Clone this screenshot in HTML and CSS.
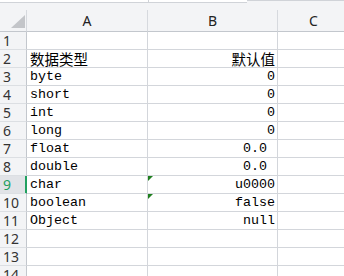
FILE: index.html
```html
<!DOCTYPE html>
<html lang="zh">
<head>
  <meta charset="UTF-8" />
  <title>Sheet1</title>
  <link rel="stylesheet" href="styles.css">
</head>
<body>
  <div class="sheet">
    <div class="formula">
      <div class="namebox"></div>
      <div class="gap"></div>
      <div class="fxbox"></div>
    </div>

    <div class="row head">
      <div class="cell num corner">
        <svg width="14" height="13" viewBox="0 0 14 13"><polygon points="14,0 14,13 0,13" fill="#c3c5c9"/></svg>
      </div>
      <div class="cell col">A</div>
      <div class="cell col">B</div>
      <div class="cell col">C</div>
    </div>

    <div class="row"><div class="cell num">1</div><div class="cell"></div><div class="cell"></div><div class="cell"></div></div>
    <div class="row"><div class="cell num">2</div><div class="cell"><span class="zh">数据类型</span></div><div class="cell right"><span class="zh">默认值</span></div><div class="cell"></div></div>
    <div class="row"><div class="cell num">3</div><div class="cell">byte</div><div class="cell right">0</div><div class="cell"></div></div>
    <div class="row"><div class="cell num">4</div><div class="cell">short</div><div class="cell right">0</div><div class="cell"></div></div>
    <div class="row"><div class="cell num">5</div><div class="cell">int</div><div class="cell right">0</div><div class="cell"></div></div>
    <div class="row"><div class="cell num">6</div><div class="cell">long</div><div class="cell right">0</div><div class="cell"></div></div>
    <div class="row"><div class="cell num">7</div><div class="cell">float</div><div class="cell right dec">0.0</div><div class="cell"></div></div>
    <div class="row"><div class="cell num">8</div><div class="cell">double</div><div class="cell right dec">0.0</div><div class="cell"></div></div>
    <div class="row"><div class="cell num active">9</div><div class="cell">char</div><div class="cell right flag">u0000</div><div class="cell"></div></div>
    <div class="row"><div class="cell num">10</div><div class="cell">boolean</div><div class="cell right flag">false</div><div class="cell"></div></div>
    <div class="row"><div class="cell num">11</div><div class="cell">Object</div><div class="cell right">null</div><div class="cell"></div></div>
    <div class="row"><div class="cell num">12</div><div class="cell"></div><div class="cell"></div><div class="cell"></div></div>
    <div class="row"><div class="cell num">13</div><div class="cell"></div><div class="cell"></div><div class="cell"></div></div>
    <div class="row"><div class="cell num">14</div><div class="cell"></div><div class="cell"></div><div class="cell"></div></div>
  </div>
</body>
</html>
```

FILE: styles.css
```css
* { box-sizing: border-box; }

body {
  margin: 0;
  background-color: #ffffff;
  overflow: hidden;
}

.sheet {
  width: 344px;
  height: 276px;
  overflow: hidden;
  background-color: #f3f4f6;
}

.formula {
  display: flex;
  height: 3px;
}

.namebox {
  width: 149px;
  height: 3px;
  background-color: #ffffff;
  border-right: 1px solid #d0d3d8;
  border-bottom: 1px solid #d0d3d8;
}

.gap {
  width: 98px;
  height: 3px;
  background-color: #ffffff;
  border-bottom: 1px solid #d0d3d8;
}

.fxbox {
  flex-grow: 1;
  height: 1px;
  background-color: #ffffff;
  border-left: 1px solid #d0d3d8;
  border-bottom: 1px solid #d0d3d8;
}

.row {
  display: grid;
  grid-template-columns: 27px 121px 130px 72px;
  height: 18px;
  background-color: #ffffff;
}

.cell {
  position: relative;
  height: 18px;
  padding: 1px 3px 0 3px;
  border-right: 1px solid #d3d6db;
  border-bottom: 1px solid #d3d6db;
  font-family: "Liberation Mono", "Noto Sans CJK SC", monospace;
  font-size: 13.33px;
  line-height: 16px;
  color: #000000;
  white-space: pre;
}

.zh {
  font-family: "Noto Sans CJK SC", sans-serif;
  font-size: 14.5px;
}

.right {
  text-align: right;
  padding-right: 2px;
}

.dec {
  padding-right: 10px;
}

.flag::before {
  content: "";
  position: absolute;
  left: 0;
  top: 0;
  border-top: 5px solid #1f7f1f;
  border-right: 5px solid transparent;
}

.num {
  background-color: #f3f4f6;
  border-right-color: #c3c7cd;
  border-bottom-color: #dcdfe3;
  font-family: "Noto Sans", sans-serif;
  font-size: 14px;
  color: #333333;
  padding-left: 3px;
  line-height: 17px;
  padding-top: 0;
}

.num.active {
  background-color: #e1e3e7;
  color: #21a060;
  border-right: 1px solid #21a060;
  box-shadow: inset -1px 0 0 #21a060;
}

.head {
  height: 29px;
  padding-top: 7px;
  background-color: #f3f4f6;
}

.head .cell {
  height: 22px;
  background-color: #f3f4f6;
  border-right-color: #d6d9de;
  border-bottom-color: #c3c7cd;
}

.col {
  text-align: center;
  font-family: "Noto Sans", sans-serif;
  font-size: 14px;
  line-height: 20px;
  color: #222222;
}

.corner {
  display: flex;
  justify-content: flex-end;
  align-items: flex-end;
  padding: 0 1px 3px 0;
}
```
